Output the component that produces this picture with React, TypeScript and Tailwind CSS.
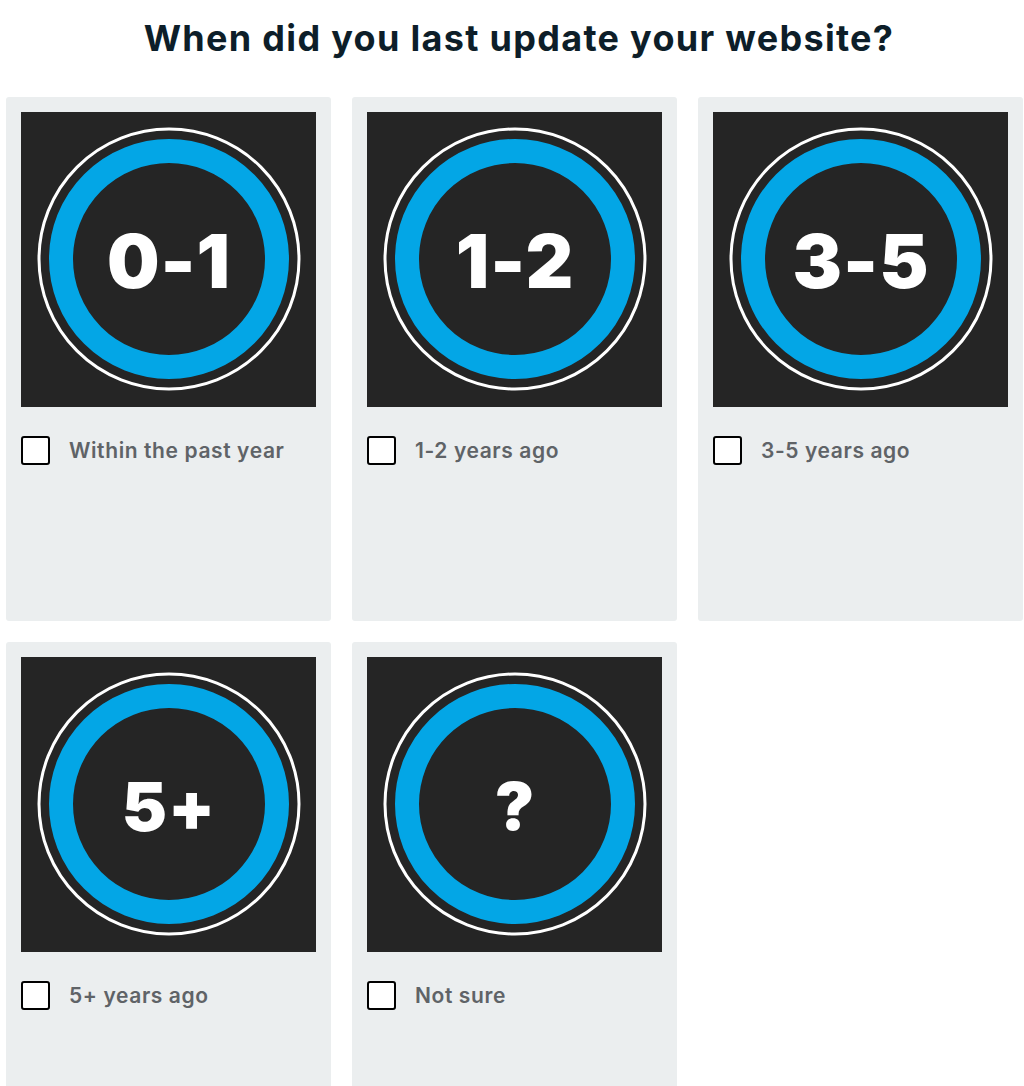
import React from "react";

type Option = { badge: string; label: string; size: number };

const options: Option[] = [
  { badge: "0-1", label: "Within the past year", size: 74 },
  { badge: "1-2", label: "1-2 years ago", size: 74 },
  { badge: "3-5", label: "3-5 years ago", size: 74 },
  { badge: "5+", label: "5+ years ago", size: 68 },
  { badge: "?", label: "Not sure", size: 66 },
];

function Badge({ text, size }: { text: string; size: number }) {
  return (
    <svg viewBox="0 0 295 295" className="block w-[295px] h-[295px]">
      <rect width="295" height="295" fill="#252525" />
      <circle cx="148" cy="147" r="130" fill="none" stroke="#ffffff" strokeWidth="3" />
      <circle cx="148" cy="147" r="108" fill="none" stroke="#03a6e6" strokeWidth="24" />
      <text
        x="148"
        y="149"
        textAnchor="middle"
        dominantBaseline="central"
        fill="#ffffff"
        fontFamily="Inter, 'Open Sans', sans-serif"
        fontWeight={900}
        fontSize={size}
        letterSpacing="1"
      >
        {text}
      </text>
    </svg>
  );
}

function Card({ option }: { option: Option }) {
  return (
    <div className="bg-[#ebeeef] rounded-[3px] p-[15px] h-[524px]">
      <Badge text={option.badge} size={option.size} />
      <label className="flex items-center mt-[29px] gap-[19px] cursor-pointer">
        <span className="w-[29px] h-[29px] shrink-0 bg-white border-2 border-black rounded-[3px]" />
        <span className="text-[21px] font-semibold text-[#5f6367] leading-none tracking-[0.6px]">
          {option.label}
        </span>
      </label>
    </div>
  );
}

export default function App() {
  return (
    <div
      className="w-[1024px] h-[1086px] overflow-hidden bg-white"
      style={{ fontFamily: "Inter, 'Open Sans', sans-serif" }}
    >
      <h1 className="h-[97px] pb-[22px] pl-[14px] flex items-center justify-center text-[36px] font-bold text-[#0d1e29] tracking-[1.3px]">
        When did you last update your website?
      </h1>
      <div className="grid grid-cols-[325px_325px_325px] gap-[21px] pl-[6px]">
        {options.map((o) => (
          <Card key={o.badge} option={o} />
        ))}
      </div>
    </div>
  );
}
